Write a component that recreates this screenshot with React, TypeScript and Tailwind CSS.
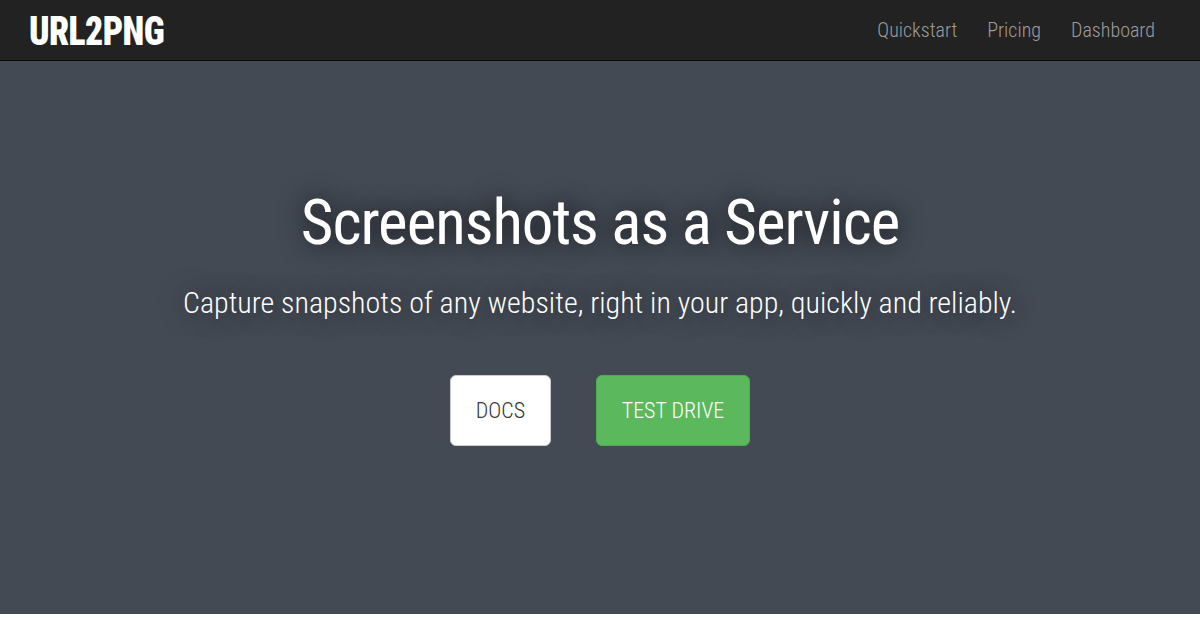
const navLinks = ["Quickstart", "Pricing", "Dashboard"];

export default function App() {
  return (
    <div className="h-[630px] w-[1200px] overflow-hidden bg-white font-['Roboto_Condensed','Roboto',sans-serif]">
      <nav className="flex h-[61px] items-center justify-between border-b border-[#080808] bg-[#222] pr-[45px] pl-[29px]">
        <a
          href="#"
          className="inline-block origin-left scale-x-[0.87] pt-[2px] text-[41px] leading-none font-black tracking-[-0.7px] text-white"
        >
          URL2PNG
        </a>
        <div className="flex gap-[30px] text-xl font-light text-[#9d9d9d]">
          {navLinks.map((label) => (
            <a key={label} href="#">
              {label}
            </a>
          ))}
        </div>
      </nav>

      <header className="flex h-[553px] flex-col items-center bg-[#434a54] pt-[127px] text-white">
        <h1 className="text-[63px] leading-[70px] tracking-[-1px] [text-shadow:0_0_25px_rgba(0,0,0,0.8)]">
          Screenshots as a Service
        </h1>
        <p className="mt-[24px] text-[30px] leading-[42px] font-light [text-shadow:0_0_25px_rgba(0,0,0,0.6)]">
          Capture snapshots of any website, right in your app, quickly and reliably.
        </p>

        <div className="mt-[51px] flex gap-[45px] text-[22px] font-light">
          <a
            href="#"
            className="flex h-[71px] w-[101px] items-center justify-center rounded-md border border-[#ccc] bg-white text-[#333]"
          >
            DOCS
          </a>
          <a
            href="#"
            className="flex h-[71px] w-[154px] items-center justify-center rounded-md border border-[#4cae4c] bg-[#5cb85c] text-white"
          >
            TEST DRIVE
          </a>
        </div>
      </header>
    </div>
  );
}
